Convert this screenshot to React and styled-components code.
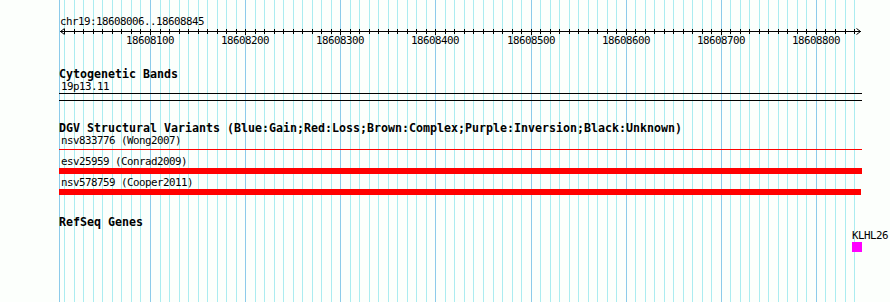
import React from "react";
import styled, { createGlobalStyle } from "styled-components";

const GlobalStyle = createGlobalStyle`
  html, body {
    margin: 0;
    padding: 0;
    background: #fcfffc;
  }
  body {
    font-family: "DejaVu Sans Mono", "Liberation Mono", monospace;
    color: #000;
  }
`;

const VIEW_START = 18608006;
const VIEW_END = 18608845;
const ORIGIN_BP = 18608100;
const ORIGIN_PX = 91;
const PX_PER_BP = 0.9514;
const TRACK_WIDTH = 803;

// position inside the track area (which starts 59px from the page edge)
const toPx = (bp) => ORIGIN_PX + (bp - ORIGIN_BP) * PX_PER_BP;

const ticks = [];
for (let bp = 18608010; bp <= 18608840; bp += 10) {
  ticks.push({ bp, x: Math.round(toPx(bp)), major: bp % 100 === 0 });
}

const Page = styled.div`
  position: relative;
  width: 890px;
  height: 302px;
  overflow: hidden;
  background: #fcfffc;
`;

const GridLayer = styled.div`
  position: absolute;
  top: 0;
  bottom: 0;
  left: 59px;
  width: ${TRACK_WIDTH}px;
  pointer-events: none;
`;

const GridLine = styled.div`
  position: absolute;
  top: 0;
  bottom: 0;
  width: 1px;
  background: ${(p) => (p.$major ? "#8ccbea" : "#aaecf0")};
`;

const Content = styled.div`
  position: relative;
  padding-left: 59px;
  display: flex;
  flex-direction: column;
  gap: 21px;
`;

const RulerBlock = styled.div`
  padding-top: 17px;
  display: flex;
  flex-direction: column;
`;

const Label = styled.div`
  font-size: 10.8px;
  letter-spacing: -0.5px;
  line-height: 10px;
  height: 10px;
  white-space: nowrap;
  padding-left: ${(p) => p.$indent || 0}px;
`;

const RulerSvg = styled.svg`
  display: block;
  overflow: visible;
`;

const TickLabel = styled.text`
  font-family: "DejaVu Sans Mono", monospace;
  font-size: 10.8px;
  letter-spacing: -0.5px;
  fill: #000;
`;

const Track = styled.section`
  display: flex;
  flex-direction: column;
`;

const TrackTitle = styled.h3`
  margin: 0 0 2px;
  font-size: 11.63px;
  line-height: 12px;
  height: 12px;
  font-weight: bold;
  white-space: nowrap;
`;

const BandLabel = styled(Label)`
  margin-bottom: 1px;
`;

const Band = styled.div`
  width: ${TRACK_WIDTH}px;
  height: 6px;
  border-top: 1px solid #000;
  border-bottom: 1px solid #000;
`;

const FeatureList = styled.div`
  display: flex;
  flex-direction: column;
  gap: 4px;
`;

const Feature = styled.div`
  display: flex;
  flex-direction: column;
`;

const BarSlot = styled.div`
  margin-top: 1px;
  height: 6px;
`;

const Bar = styled.div`
  height: ${(p) => (p.$thin ? 1 : 6)}px;
  margin-top: ${(p) => (p.$thin ? 2 : 0)}px;
  background: ${(p) => p.$color};
`;

const GeneRow = styled.div`
  margin-top: 1px;
  display: flex;
  flex-direction: column;
`;

const GeneBox = styled.div`
  margin-top: 1px;
  width: 10px;
  height: 10px;
  background: #ff00ff;
`;

const variants = [
  { name: "nsv833776 (Wong2007)", end: 803, thin: true },
  { name: "esv25959 (Conrad2009)", end: 803 },
  { name: "nsv578759 (Cooper2011)", end: 802 },
];

const Ruler = () => (
  <RulerSvg width={TRACK_WIDTH} height={20}>
    <line x1={1} y1={4.5} x2={802} y2={4.5} stroke="#000" strokeWidth={1} />
    <polyline points="5.5,1.5 1.5,4.5 5.5,7.5" fill="none" stroke="#000" strokeWidth={1} />
    <polyline points="797.5,1.5 801.5,4.5 797.5,7.5" fill="none" stroke="#000" strokeWidth={1} />
    {ticks.map((t) => {
      const x = t.x + 0.5;
      return (
        <line
          key={t.bp}
          x1={x}
          y1={2}
          x2={x}
          y2={t.major ? 8 : 7}
          stroke="#000"
          strokeWidth={1}
        />
      );
    })}
    {ticks
      .filter((t) => t.major)
      .map((t) => (
        <TickLabel key={t.bp} x={t.x} y={17} textAnchor="middle">
          {t.bp}
        </TickLabel>
      ))}
  </RulerSvg>
);

export default function App() {
  return (
    <Page>
      <GlobalStyle />
      <GridLayer>
        <GridLine $major style={{ left: 0 }} />
        {ticks.map((t) => (
          <GridLine key={t.bp} $major={t.major} style={{ left: t.x }} />
        ))}
      </GridLayer>
      <Content>
        <RulerBlock>
          <Label $indent={1}>
            chr19:{VIEW_START}..{VIEW_END}
          </Label>
          <Ruler />
        </RulerBlock>

        <Track>
          <TrackTitle>Cytogenetic Bands</TrackTitle>
          <BandLabel $indent={2}>19p13.11</BandLabel>
          <Band />
        </Track>

        <Track>
          <TrackTitle>
            DGV Structural Variants (Blue:Gain;Red:Loss;Brown:Complex;Purple:Inversion;Black:Unknown)
          </TrackTitle>
          <FeatureList>
            {variants.map((v) => (
              <Feature key={v.name}>
                <Label $indent={2}>{v.name}</Label>
                <BarSlot>
                  <Bar $thin={v.thin} $color="#ff0000" style={{ width: v.end }} />
                </BarSlot>
              </Feature>
            ))}
          </FeatureList>
        </Track>

        <Track>
          <TrackTitle>RefSeq Genes</TrackTitle>
          <GeneRow style={{ marginLeft: 793 }}>
            <Label>KLHL26</Label>
            <GeneBox />
          </GeneRow>
        </Track>
      </Content>
    </Page>
  );
}
